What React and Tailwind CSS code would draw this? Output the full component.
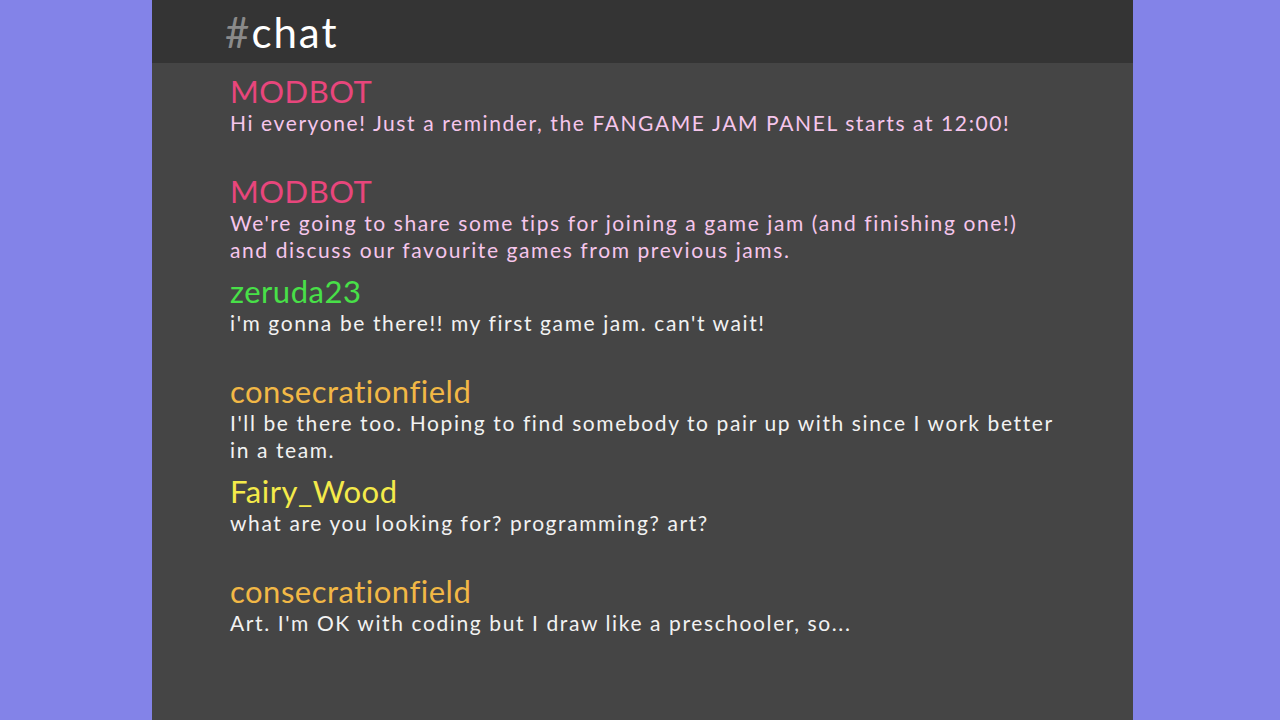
import React from 'react';

const messages = [
  { user: 'MODBOT', color: 'text-[#e8467c]', textColor: 'text-[#f6c6ec]', text: 'Hi everyone! Just a reminder, the FANGAME JAM PANEL starts at 12:00!' },
  { user: 'MODBOT', color: 'text-[#e8467c]', textColor: 'text-[#f6c6ec]', text: "We're going to share some tips for joining a game jam (and finishing one!) and discuss our favourite games from previous jams." },
  { user: 'zeruda23', color: 'text-[#48e048]', textColor: 'text-[#f2f2f2]', text: "i'm gonna be there!! my first game jam. can't wait!" },
  { user: 'consecrationfield', color: 'text-[#f2b846]', textColor: 'text-[#f2f2f2]', text: "I'll be there too. Hoping to find somebody to pair up with since I work better in a team." },
  { user: 'Fairy_Wood', color: 'text-[#f4ea4a]', textColor: 'text-[#f2f2f2]', text: 'what are you looking for? programming? art?' },
  { user: 'consecrationfield', color: 'text-[#f2b846]', textColor: 'text-[#f2f2f2]', text: "Art. I'm OK with coding but I draw like a preschooler, so..." },
];

export default function App() {
  return (
    <div className="w-full h-[720px] bg-[#8383e8] flex pl-[152px] overflow-hidden" style={{ fontFamily: 'Lato, "Open Sans", sans-serif', fontVariantLigatures: 'none' }}>
      <div className="w-[981px] h-full bg-[#454545] flex flex-col">
        <header className="h-[63px] bg-[#343434] flex items-center pl-[73px]">
          <h1 className="text-[42px] leading-none tracking-[2px]">
            <span className="text-[#8a8a8a]">#</span>
            <span className="text-white">chat</span>
          </h1>
        </header>
        <div className="flex flex-col pt-[12px] pl-[78px] pr-[70px]">
          {messages.map((m, i) => (
            <div key={i} className="h-[100px]">
              <div className={`text-[31px] leading-[33px] tracking-[0.5px] ${m.color}`}>{m.user}</div>
              <p className={`mt-[1px] text-[21px] leading-[27px] tracking-[1.6px] ${m.textColor}`}>{m.text}</p>
            </div>
          ))}
        </div>
      </div>
    </div>
  );
}
